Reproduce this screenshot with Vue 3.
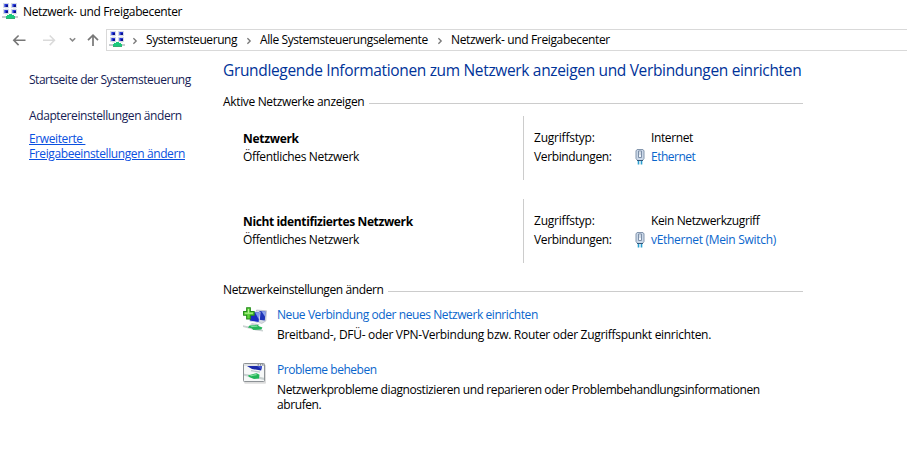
<script setup>
import { h } from 'vue'

const NetworkIcon = () =>
  h('svg', { width: 16, height: 17, viewBox: '0 0 16 17' }, [
    ...[[1, 0], [9, 0], [1, 6], [9, 6]].flatMap(([x, y]) => [
      h('rect', { x, y, width: 6, height: 5, fill: '#d6dbe6' }),
      h('rect', { x: x + 1, y: y + 1, width: 4, height: 3, fill: '#2a3ad6' }),
      h('rect', { x: x + 1, y: y + 1, width: 1, height: 3, fill: '#6878e4' }),
      h('rect', { x: x + 3, y: y + 2, width: 2, height: 2, fill: '#0b128f' }),
      h('rect', { x: x + 2, y: y + 5, width: 3, height: 1, fill: '#eceef2' })
    ]),
    h('rect', { x: 0, y: 13, width: 16, height: 2, fill: '#c6cbce' }),
    h('path', { d: 'M7 11h3v1h2v1h1v3H4v-3h1v-1h2z', fill: '#1cc97c' }),
    h('path', { d: 'M4 15h9v1H4z', fill: '#35ad72' })
  ])

const crumbs = [
  { text: 'Systemsteuerung', cls: 'c1' },
  { text: 'Alle Systemsteuerungselemente', cls: 'c2' },
  { text: 'Netzwerk- und Freigabecenter', cls: 'c3' }
]
const networks = [
  { name: 'Netzwerk', access: 'Internet', link: 'Ethernet', cls: 'n1' },
  { name: 'Nicht identifiziertes Netzwerk', access: 'Kein Netzwerkzugriff', link: 'vEthernet (Mein Switch)', cls: 'n2' }
]
</script>

<template>
  <div class="window">
    <header class="titlebar">
      <NetworkIcon />
      <span class="title">Netzwerk- und Freigabecenter</span>
    </header>

    <nav class="toolbar">
      <svg class="nav" width="106" height="22" viewBox="0 0 106 22" fill="none">
        <path d="M25.5 11.3H13.8M18.6 6.5l-4.8 4.8 4.8 4.8" stroke="#777" stroke-width="1.6" />
        <path d="M43 11.3h11.5M49.7 6.5l4.8 4.8-4.8 4.8" stroke="#dadada" stroke-width="1.5" />
        <path d="M69.8 9.2l2.7 2.7 2.7-2.7" stroke="#888" stroke-width="1.5" />
        <path d="M93 17V6.3M88 11.2l5-5 5 5" stroke="#777" stroke-width="1.7" />
      </svg>
      <div class="address">
        <NetworkIcon />
        <template v-for="c in crumbs" :key="c.text">
          <svg class="chev" width="6" height="8" viewBox="0 0 6 8"><path d="M1.4 1.2L4.2 4 1.4 6.8" fill="none" stroke="#777" stroke-width="1.3" /></svg>
          <span class="crumb" :class="c.cls">{{ c.text }}</span>
        </template>
      </div>
    </nav>

    <div class="body">
      <aside class="side">
        <a class="s1">Startseite der Systemsteuerung</a>
        <a class="s2">Adaptereinstellungen ändern</a>
        <a class="s3">Erweiterte&nbsp;<br />Freigabeeinstellungen ändern</a>
      </aside>

      <main class="main">
        <h1>Grundlegende Informationen zum Netzwerk anzeigen und Verbindungen einrichten</h1>
        <div class="group"><span class="g1">Aktive Netzwerke anzeigen</span><i></i></div>

        <section v-for="n in networks" :key="n.name" class="network" :class="n.cls">
          <div class="who">
            <strong>{{ n.name }}</strong>
            <span class="kind">Öffentliches Netzwerk</span>
          </div>
          <div class="facts">
            <div class="fact"><span class="label l1">Zugriffstyp:</span><span class="access">{{ n.access }}</span></div>
            <div class="fact">
              <span class="label l2">Verbindungen:</span>
              <svg class="plug" width="10" height="16" viewBox="0 0 10 16">
                <path d="M3.5 12v3.6M6.5 12v3.6" stroke="#2c9fd0" stroke-width="1.6" />
                <path d="M2 .5h6l.5 1h.5v8L7.5 11.5h-5L1 9.5v-8h.5z" fill="#cbd8e8" stroke="#8497ae" />
                <path d="M3.5 2v6.5h3V2z" fill="#f3f7fb" stroke="#7c8fa8" />
                <path d="M5 2v4" stroke="#b4c2d4" />
                <path d="M2 11.5h6" stroke="#34587c" />
              </svg>
              <a class="conn">{{ n.link }}</a>
            </div>
          </div>
        </section>

        <div class="group second"><span class="g2">Netzwerkeinstellungen ändern</span><i></i></div>

        <section class="task t1">
          <svg width="24" height="26" viewBox="0 0 24 26">
            <path d="M13.5 3l10 .8-.7 10.2-4 2.4-6-1.6z" fill="#d9dde4" stroke="#a9b0bb" stroke-width=".6" />
            <path d="M16 4l6.6.6-.8 8.8-5.8-.6z" fill="#2036b8" />
            <path d="M18.5 4.2l4.1.4-.5 5.2z" fill="#8da6ee" />
            <path d="M6 4.4l11 .6-.9 10.6L6.6 14z" fill="#1a2bc2" stroke="#e3e7ee" stroke-width=".9" />
            <path d="M12 5.2l4.4.3-.6 7z" fill="#7f99ee" />
            <path d="M9 16l7.5 1.2-1.5 2-8-1.6z" fill="#c9ced6" />
            <path d="M0 18.2l6 1.2 14 3.6v1.6l-7-1L0 20z" fill="#ccd3d3" />
            <path d="M6.5 18.4l8-.6 1.5 1.4 3.4 1.4-1 1.8-7.9.6-2-1.8-3.6-.8z" fill="#25b45a" />
            <path d="M7.5 19l6.4-.5 1 1-6 .6z" fill="#83e3a2" />
            <path d="M3.7.8h3.6v3.7h3.8v3.7H7.3V12H3.7V8.2H.6V4.5h3.1z" fill="#5ed33a" stroke="#248c1b" stroke-width="1.1" />
            <path d="M4.9 2h1.2v3.7h3.8v1H1.8v-1h3.1z" fill="#b5f394" />
          </svg>
          <div>
            <a class="k1">Neue Verbindung oder neues Netzwerk einrichten</a>
            <p class="p1">Breitband-, DFÜ- oder VPN-Verbindung bzw. Router oder Zugriffspunkt einrichten.</p>
          </div>
        </section>

        <section class="task t2">
          <svg width="24" height="22" viewBox="0 0 24 22">
            <rect x="1.2" y="1.7" width="21.8" height="19" rx="1" fill="#ddd" />
            <rect x=".5" y=".5" width="21" height="18" rx=".8" fill="#f6f8f8" stroke="#8d9296" />
            <path d="M1 1h20v2H1z" fill="#e1e4e7" />
            <path d="M14.6 1.8h1.3M16.9 1.8h1.3M19.2 1.8h1.3" stroke="#68707a" stroke-width="1.2" />
            <path d="M4 3h15l-.9 4.6L9 6z" fill="#1b2aaa" />
            <path d="M14 3h5l-.6 3.4z" fill="#4055cf" />
            <path d="M8 7.6l9 1.6" stroke="#bcc3cc" stroke-width="1.2" />
            <path d="M1 10.8l5 .7 15 3.2v2.2L1 12.8z" fill="#c7d0d0" />
            <path d="M5 12.4l8.6-2.2 2.9 1.5-.5 3.8-5 .5-5-2z" fill="#20b557" />
            <path d="M6.5 12.5l6.5-1.5 1.2.9-6 1.4z" fill="#83dfa0" />
          </svg>
          <div>
            <a class="k2">Probleme beheben</a>
            <p class="p2">Netzwerkprobleme diagnostizieren und reparieren oder Problembehandlungsinformationen<br />abrufen.</p>
          </div>
        </section>
      </main>
    </div>
  </div>
</template>

<style>
body { margin: 0; background: #fff; }
</style>

<style scoped>
.window { width: 907px; height: 476px; overflow: hidden; background: #fff; color: #000; font: 12px/15px "Open Sans", "Noto Sans", sans-serif; letter-spacing: -0.3px; white-space: nowrap; }
svg { display: block; flex: none; }
.titlebar { display: flex; height: 29px; padding: 3px 0 0 2px; box-sizing: border-box; }
.title { margin: 1px 0 0 5px; letter-spacing: -0.35px; }
.toolbar { display: flex; height: 22px; }
.address { flex: 1; display: flex; box-sizing: border-box; border: 1px solid #d9d9d9; border-right: 0; padding: 1px 0 0 2px; }
.crumb { margin-top: 1px; }
.chev { margin: 6px 8px 0 7px; }
.c1 { width: 93px; letter-spacing: -0.42px; }
.c2 { width: 170px; letter-spacing: -0.4px; }
.c3 { letter-spacing: -0.36px; }
.body { display: flex; }
.side { width: 223px; box-sizing: border-box; padding: 21px 0 0 29px; display: flex; flex-direction: column; align-items: flex-start; color: #151c55; }
.s1 { letter-spacing: -0.47px; }
.s2 { margin-top: 21px; letter-spacing: -0.4px; }
.s3 { margin-top: 8px; letter-spacing: -0.39px; color: #0a50e0; text-decoration: underline; text-underline-offset: 1px; }
.main { width: 580px; }
h1 { margin: 9px 0 0; font-size: 15.5px; line-height: 20px; font-weight: 400; color: #003399; letter-spacing: -0.335px; }
.group { display: flex; height: 15px; margin-top: 14px; }
.group i { flex: 1; height: 1px; margin-top: 9px; background: #ccc; }
.g1 { width: 146px; letter-spacing: -0.34px; }
.g2 { width: 165px; letter-spacing: -0.4px; }
.network { display: flex; height: 64px; margin: 7px 0 0 20px; }
.n2 { margin-top: 19px; }
.who { width: 280px; box-sizing: border-box; padding-top: 15px; display: flex; flex-direction: column; gap: 3px; }
.n2 strong { letter-spacing: -0.37px; }
.kind { letter-spacing: -0.36px; }
.facts { border-left: 1px solid #ccc; padding: 14px 0 0 10px; display: flex; flex-direction: column; gap: 4px; }
.fact { display: flex; height: 15px; }
.label { width: 117px; }
.l1 { letter-spacing: -0.22px; }
.l2 { width: 101px; letter-spacing: -0.37px; }
.access { letter-spacing: -0.38px; }
.n1 .conn { letter-spacing: -0.5px; }
.plug { margin: 0 6px 0 0; }
.conn, .task a { color: #0a66cc; }
.second { margin-top: 19px; }
.task { display: flex; margin-left: 20px; }
.task > div { margin-left: 10px; }
.task a { display: block; }
.k1 { letter-spacing: -0.42px; }
.k2 { letter-spacing: -0.46px; }
.task p { margin: 5px 0 0; }
.p2 { letter-spacing: -0.405px; }
.t1 { margin-top: 10px; }
.t2 { margin-top: 20px; }
.t2 > svg { margin-top: 1px; }
</style>
